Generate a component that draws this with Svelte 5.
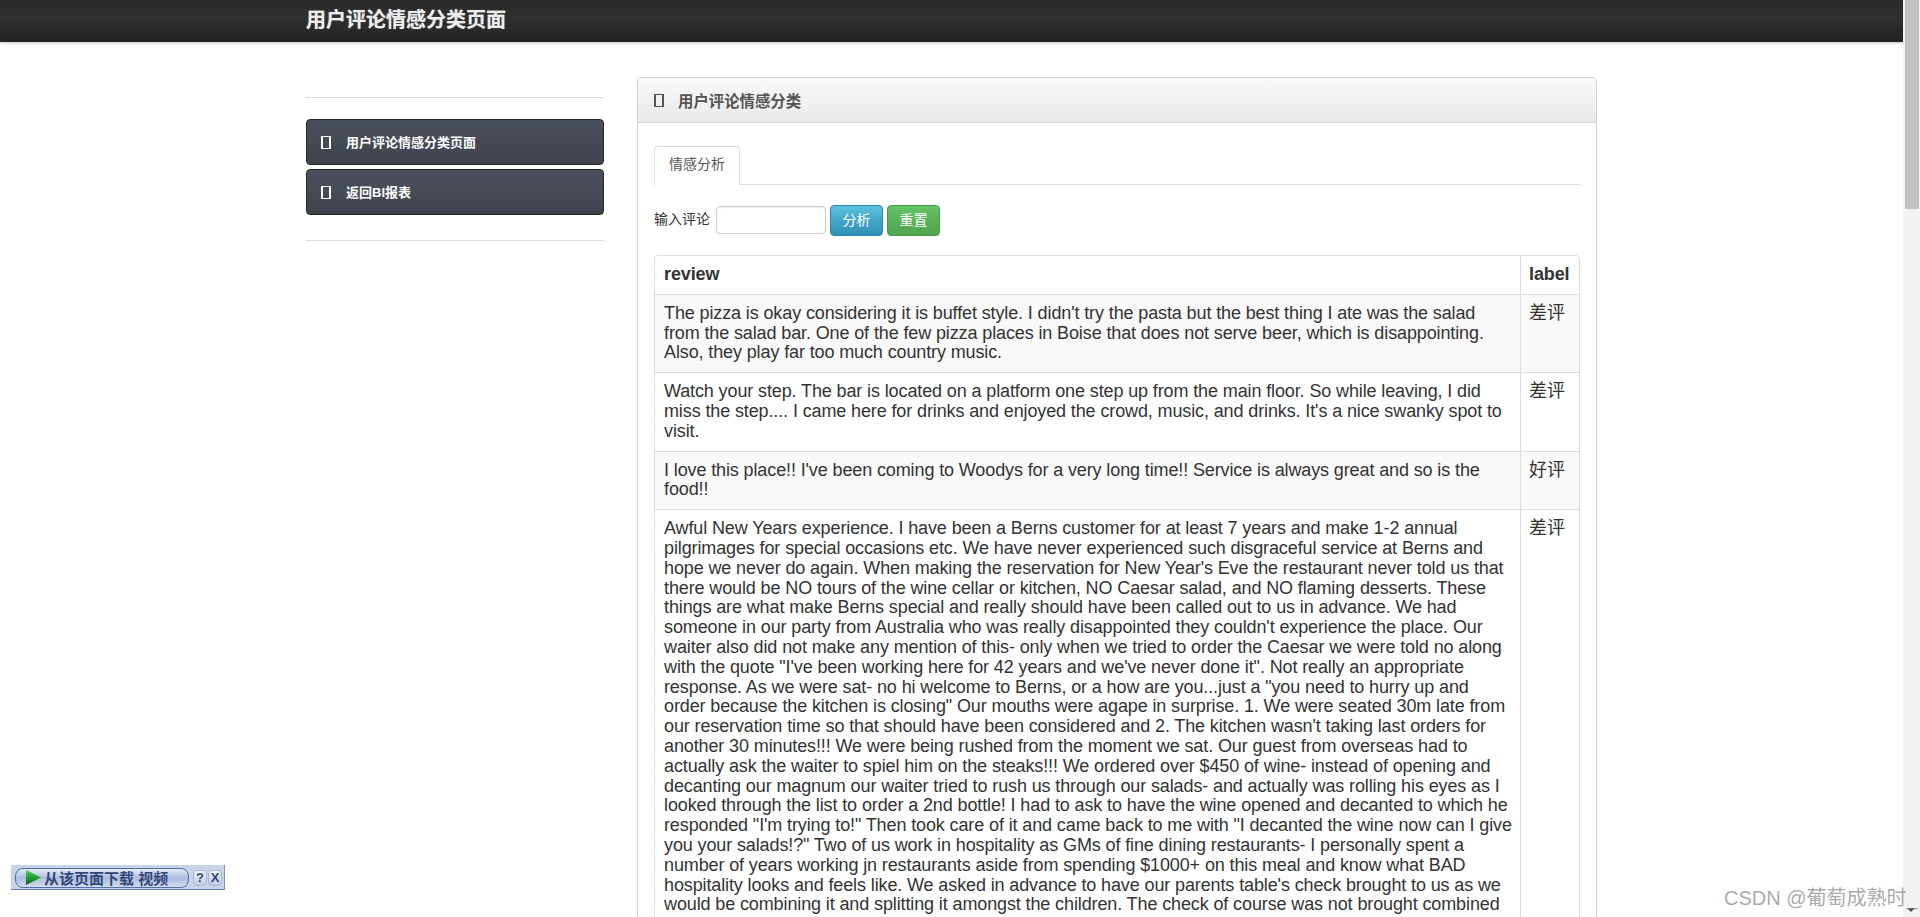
<script lang="ts">
  // Review sentiment page: fixed-height viewport with a fake window scrollbar.
  const rows = [
    {
      label: "差评",
      lines: [
        "The pizza is okay considering it is buffet style. I didn't try the pasta but the best thing I ate was the salad",
        "from the salad bar. One of the few pizza places in Boise that does not serve beer, which is disappointing.",
        "Also, they play far too much country music.",
      ],
    },
    {
      label: "差评",
      lines: [
        "Watch your step. The bar is located on a platform one step up from the main floor. So while leaving, I did",
        "miss the step.... I came here for drinks and enjoyed the crowd, music, and drinks. It's a nice swanky spot to",
        "visit.",
      ],
    },
    {
      label: "好评",
      lines: [
        "I love this place!! I've been coming to Woodys for a very long time!! Service is always great and so is the",
        "food!!",
      ],
    },
    {
      label: "差评",
      lines: [
        "Awful New Years experience. I have been a Berns customer for at least 7 years and make 1-2 annual",
        "pilgrimages for special occasions etc. We have never experienced such disgraceful service at Berns and",
        "hope we never do again. When making the reservation for New Year's Eve the restaurant never told us that",
        "there would be NO tours of the wine cellar or kitchen, NO Caesar salad, and NO flaming desserts. These",
        "things are what make Berns special and really should have been called out to us in advance. We had",
        "someone in our party from Australia who was really disappointed they couldn't experience the place. Our",
        "waiter also did not make any mention of this- only when we tried to order the Caesar we were told no along",
        "with the quote \"I've been working here for 42 years and we've never done it\". Not really an appropriate",
        "response. As we were sat- no hi welcome to Berns, or a how are you...just a \"you need to hurry up and",
        "order because the kitchen is closing\" Our mouths were agape in surprise. 1. We were seated 30m late from",
        "our reservation time so that should have been considered and 2. The kitchen wasn't taking last orders for",
        "another 30 minutes!!! We were being rushed from the moment we sat. Our guest from overseas had to",
        "actually ask the waiter to spiel him on the steaks!!! We ordered over $450 of wine- instead of opening and",
        "decanting our magnum our waiter tried to rush us through our salads- and actually was rolling his eyes as I",
        "looked through the list to order a 2nd bottle! I had to ask to have the wine opened and decanted to which he",
        "responded \"I'm trying to!\" Then took care of it and came back to me with \"I decanted the wine now can I give",
        "you your salads!?\" Two of us work in hospitality as GMs of fine dining restaurants- I personally spent a",
        "number of years working jn restaurants aside from spending $1000+ on this meal and know what BAD",
        "hospitality looks and feels like. We asked in advance to have our parents table's check brought to us as we",
        "would be combining it and splitting it amongst the children. The check of course was not brought combined",
      ],
    },
  ];
  const nav = ["用户评论情感分类页面", "返回BI报表"];
</script>

<div class="viewport">
  <div class="page">
    <header class="navbar"><div class="brand">用户评论情感分类页面</div></header>

    <div class="columns">
      <aside class="sidebar">
        <ul class="side-nav">
          {#each nav as item}
            <li><span class="tofu"></span><span class="nav-text">{item}</span></li>
          {/each}
        </ul>
      </aside>

      <main class="panel">
        <div class="panel-head"><span class="tofu"></span><h1>用户评论情感分类</h1></div>
        <div class="panel-body">
          <div class="tabs"><div class="tab">情感分析</div></div>
          <form class="form" onsubmit={(e) => e.preventDefault()}>
            <label for="review-input">输入评论</label>
            <input id="review-input" type="text" />
            <button class="btn info" type="submit">分析</button>
            <button class="btn success" type="reset">重置</button>
          </form>
          <table>
            <thead>
              <tr><th class="review">review</th><th class="label">label</th></tr>
            </thead>
            <tbody>
              {#each rows as row}
                <tr>
                  <td class="review">
                    {#each row.lines as line}<span class="line">{line}</span>{/each}
                  </td>
                  <td class="label">{row.label}</td>
                </tr>
              {/each}
            </tbody>
          </table>
        </div>
      </main>
    </div>
  </div>

  <div class="scrollbar">
    <span class="arrow up"></span>
    <div class="thumb"></div>
    <span class="arrow down"></span>
  </div>

  <div class="grabber">
    <div class="grab-main">
      <svg width="15" height="15" viewBox="0 0 15 15" aria-hidden="true">
        <defs>
          <linearGradient id="play" x1="0" y1="0" x2="0" y2="1">
            <stop offset="0" stop-color="#4fd04f" />
            <stop offset="0.55" stop-color="#1f9a32" />
            <stop offset="1" stop-color="#0d5a24" />
          </linearGradient>
        </defs>
        <path d="M0 0 L15 7.5 L0 15 Z" fill="url(#play)" />
      </svg>
      <span>从该页面下载 视频</span>
    </div>
    <span class="grab-mini">?</span>
    <span class="grab-mini">X</span>
  </div>

  <div class="watermark">CSDN @葡萄成熟时_</div>
</div>

<style>
  :global(body) {
    margin: 0;
    background: #fff;
  }
  .viewport {
    position: relative;
    width: 1920px;
    height: 917px;
    overflow: hidden;
    font-family: "Liberation Sans", "Noto Sans CJK SC", sans-serif;
    color: #333;
  }
  .page {
    width: 1903px;
  }
  .navbar {
    height: 42px;
    background: linear-gradient(to bottom, #2a2a2a, #303030 45%, #232323);
    box-shadow: 0 1px 3px rgba(0, 0, 0, 0.25);
    padding-left: 306px;
    box-sizing: border-box;
  }
  .brand {
    color: #eee;
    font-size: 20px;
    font-weight: 700;
    line-height: 41px;
    text-shadow: 0 0 1px rgba(255, 255, 255, 0.5);
  }
  .columns {
    display: flex;
    gap: 33px;
    padding: 35px 0 0 306px;
  }
  .sidebar {
    width: 298px;
    flex: none;
    padding-top: 20px;
  }
  .side-nav {
    list-style: none;
    margin: 0;
    padding: 21px 0 25px;
    border-top: 1px solid #ddd;
    border-bottom: 1px solid #ddd;
    display: flex;
    flex-direction: column;
    gap: 4px;
  }
  .side-nav li {
    height: 46px;
    box-sizing: border-box;
    display: flex;
    align-items: center;
    gap: 15px;
    padding-left: 14px;
    border: 1px solid #23262c;
    border-radius: 4px;
    background: linear-gradient(to bottom, #4b515c, #3f434d);
    color: #fff;
    font-size: 13px;
    font-weight: 700;
  }
  .nav-text {
    margin-top: -2px;
  }
  .tofu {
    display: inline-block;
    width: 10px;
    height: 13px;
    box-sizing: border-box;
    border-style: solid;
    border-color: currentColor;
    border-width: 1px 2px;
    flex: none;
  }
  .panel {
    width: 960px;
    flex: none;
    box-sizing: border-box;
    border: 1px solid #d4d4d4;
    border-bottom: 0;
    border-radius: 4px 4px 0 0;
  }
  .panel-head {
    height: 45px;
    box-sizing: border-box;
    display: flex;
    align-items: center;
    gap: 14px;
    padding-left: 16px;
    border-bottom: 1px solid #d4d4d4;
    background: linear-gradient(to bottom, #f9f9f9, #e9e9e9);
    color: #555;
  }
  .panel-head .tofu {
    margin-top: 1px;
  }
  .panel-head h1 {
    margin: 0;
    font-size: 15.4px;
    font-weight: 700;
  }
  .panel-body {
    padding: 23px 16px 0;
  }
  .tabs {
    display: flex;
    height: 38px;
    border-bottom: 1px solid #ddd;
  }
  .tab {
    height: 39px;
    width: 86px;
    box-sizing: border-box;
    border: 1px solid #ddd;
    border-bottom: 0;
    border-radius: 4px 4px 0 0;
    background: #fff;
    color: #555;
    font-size: 14px;
    line-height: 34px;
    text-align: center;
  }
  .form {
    display: flex;
    align-items: center;
    gap: 4px;
    margin-top: 20px;
    height: 31px;
    font-size: 14px;
  }
  .form label {
    color: #333;
    width: 58px;
    margin-top: -5px;
  }
  .form input {
    width: 110px;
    height: 28px;
    margin-top: -1px;
    box-sizing: border-box;
    border: 1px solid #ccc;
    border-radius: 4px;
    background: #fff;
    box-shadow: inset 0 1px 1px rgba(0, 0, 0, 0.075);
  }
  .btn {
    width: 53px;
    height: 31px;
    border-radius: 4px;
    color: #fff;
    font: 14px "Liberation Sans", "Noto Sans CJK SC", sans-serif;
    padding: 0 0 4px;
  }
  .btn.info {
    background: linear-gradient(to bottom, #5bc0de, #2f8fb1);
    border: 1px solid #2b88a8;
  }
  .btn.success {
    background: linear-gradient(to bottom, #62c462, #51a351);
    border: 1px solid #4a9a4a;
  }
  table {
    width: 926px;
    margin-top: 19px;
    border-collapse: separate;
    border-spacing: 0;
    border: 1px solid #ddd;
    border-radius: 4px;
    font-size: 18px;
    line-height: 1.1;
    letter-spacing: -0.12px;
    table-layout: fixed;
  }
  th,
  td {
    padding: 9px;
    text-align: left;
    vertical-align: top;
  }
  th {
    font-weight: 700;
  }
  td {
    border-top: 1px solid #ddd;
  }
  .line {
    display: block;
    white-space: nowrap;
  }
  .review {
    width: 847px;
  }
  .label {
    border-left: 1px solid #ddd;
    padding-left: 8px;
    padding-right: 8px;
  }
  tbody tr:nth-child(odd) td {
    background: #f9f9f9;
  }
  .scrollbar {
    position: absolute;
    top: 0;
    right: 0;
    width: 17px;
    height: 917px;
    background: #f1f1f1;
  }
  .thumb {
    position: absolute;
    top: 0;
    left: 2px;
    width: 14px;
    height: 209px;
    background: #c1c1c1;
  }
  .arrow {
    position: absolute;
    left: 4px;
    width: 0;
    height: 0;
    border-left: 4px solid transparent;
    border-right: 4px solid transparent;
  }
  .arrow.up {
    top: 5px;
    border-bottom: 4px solid #c1c1c1;
  }
  .arrow.down {
    bottom: 5px;
    border-top: 4px solid #505050;
  }
  .grabber {
    position: absolute;
    left: 11px;
    top: 865px;
    width: 214px;
    height: 25px;
    box-sizing: border-box;
    display: flex;
    align-items: center;
    gap: 1px;
    padding: 1px 1px 0 4px;
    background: #c9d3e6;
    border-bottom: 1px solid #5f7eb2;
    border-right: 1px solid #7f97c0;
  }
  .grab-main {
    width: 174px;
    height: 20px;
    box-sizing: border-box;
    display: flex;
    align-items: center;
    gap: 3px;
    padding-left: 10px;
    margin-right: 3px;
    border: 1px solid #4f6fa8;
    border-radius: 8px;
    background: linear-gradient(to bottom, #e6ecf7, #a9bcdf 50%, #d3dcee);
    color: #34477a;
    font-size: 15px;
    font-weight: 700;
    white-space: nowrap;
  }
  .grab-mini {
    width: 14px;
    height: 16px;
    border-radius: 4px;
    background: linear-gradient(to bottom, #f3f5fb, #bccbe6);
    border: 1px solid #a8b8d6;
    box-sizing: border-box;
    color: #34477a;
    font-size: 13px;
    font-weight: 700;
    line-height: 14px;
    text-align: center;
  }
  .watermark {
    position: absolute;
    left: 1724px;
    bottom: 7px;
    color: rgba(120, 120, 120, 0.65);
    font-size: 20px;
    line-height: 24px;
    white-space: nowrap;
  }
</style>
